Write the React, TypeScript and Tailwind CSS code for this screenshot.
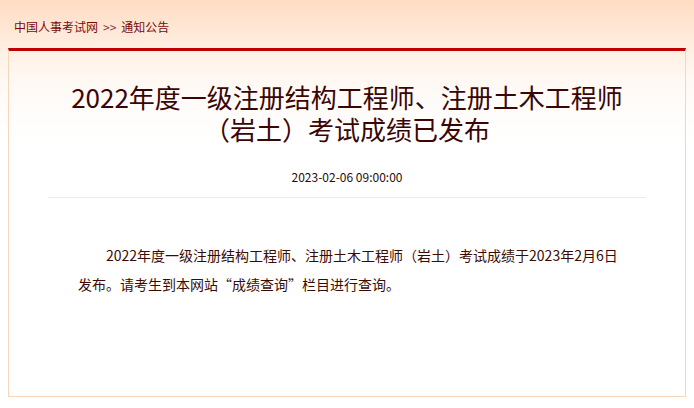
function App() {
    return (
        <div
            className="w-[694px] h-[408px] overflow-hidden bg-[linear-gradient(to_bottom,#ffdcc2_0px,#fff3ea_60px,#fffaf6_90px,#ffffff_140px)]"
            style={{ fontFamily: '"Noto Sans CJK SC", "Noto Sans", sans-serif' }}
        >
            <div className="h-[48px] flex items-center pl-[14px] pt-[6px] text-[12px] text-[#7a0a0a]">
                <span>中国人事考试网</span>
                <span className="mx-[5px] text-[#7a3a3a]">&gt;&gt;</span>
                <span>通知公告</span>
            </div>

            <div className="ml-[8px] w-[678px] h-[349px] border-t-[3px] border-t-[#c00000] border-x border-b border-[#f6d6b8] bg-transparent">
                <h1 className="pt-[30px] text-center text-[26px] leading-[32px] text-[#3a0505] font-normal">
                    2022年度一级注册结构工程师、注册土木工程师
                    <br />
                    （岩土）考试成绩已发布
                </h1>

                <p className="mt-[24px] text-center text-[12px] leading-[16px] text-[#2a0a0a]">
                    2023-02-06 09:00:00
                </p>

                <div className="mx-[39px] mt-[12px] border-t border-[#ececec]"></div>

                <div className="pl-[69px] pr-[40px] pt-[43px] text-[14px] leading-[29px] text-[#3a0a05]">
                    <p className="indent-[28px]">
                        <span className="whitespace-nowrap">2022年度一级注册结构工程师、注册土木工程师（岩土）考试成绩于2023年2月6日</span>
                        <br />
                        发布。请考生到本网站“成绩查询”栏目进行查询。
                    </p>
                </div>
            </div>
        </div>
    );
}

export default App;
